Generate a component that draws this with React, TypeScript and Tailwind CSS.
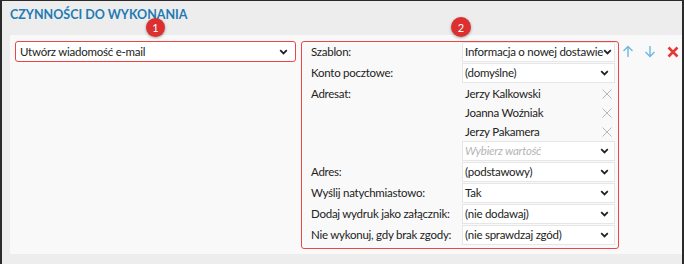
import React from "react";

const Chevron = () => (
  <svg width="9" height="6" viewBox="0 0 9 6" className="shrink-0">
    <path d="M1.2 1.2 L4.5 4.4 L7.8 1.2" fill="none" stroke="#222" strokeWidth="1.8" />
  </svg>
);

const Cross = () => (
  <svg width="10" height="10" viewBox="0 0 10 10" className="shrink-0">
    <path d="M0.5 0.5 L9.5 9.5 M9.5 0.5 L0.5 9.5" stroke="#b8b8b8" strokeWidth="1" />
  </svg>
);

function Select({ value, placeholder = false }: { value: string; placeholder?: boolean }) {
  return (
    <div className="h-[20px] w-[153px] bg-white border border-[#e6e6e6] flex items-center pl-[2px] pr-[5px] justify-between">
      <span className={placeholder ? "italic text-[#b5b5b5] whitespace-nowrap" : "text-[#222] whitespace-nowrap"}>{value}</span>
      <Chevron />
    </div>
  );
}

function Row({ label, value }: { label: string; value: string }) {
  return (
    <div className="flex items-center h-[20px]">
      <div className="w-[151px] text-[#222] whitespace-nowrap">{label}</div>
      <Select value={value} />
    </div>
  );
}

export default function App() {
  return (
    <div
      className="relative w-[684px] h-[264px] bg-[#ededed] border-t border-l-2 border-r-2 border-[#2a2a2a] text-[11.5px] tracking-[-0.25px] leading-none"
      style={{ fontFamily: 'Lato, "Noto Sans", sans-serif' }}
    >
      <div className="h-[34px] pl-[8px] pt-[8px]">
        <span className="text-[12.5px] font-bold text-[#1f7bb3] tracking-normal">CZYNNOŚCI DO WYKONANIA</span>
      </div>
      <div className="ml-[8px] mr-0 h-[219px] bg-[#f9f9f9] flex items-start pt-[6px] pl-[5px]">
        <div className="w-[281px] h-[21px] border border-[#ef4444] rounded-[3px] bg-white flex items-center justify-between pl-[4px] pr-[7px]">
          <span className="text-[#222]">Utwórz wiadomość e-mail</span>
          <Chevron />
        </div>
        <div className="ml-[5px] w-[318px] h-[208px] border border-[#ef4444] rounded-[3px] pl-[9px] pt-[0px] flex flex-col gap-[1px]">
          <Row label="Szablon:" value="Informacja o nowej dostawie" />
          <Row label="Konto pocztowe:" value="(domyślne)" />
          <div className="flex">
            <div className="w-[151px] h-[19px] flex items-center text-[#222]">Adresat:</div>
            <div className="flex flex-col">
              {["Jerzy Kalkowski", "Joanna Woźniak", "Jerzy Pakamera"].map((n) => (
                <div key={n} className="w-[153px] h-[19px] flex items-center justify-between pl-[3px] pr-[3px] text-[#222]">
                  <span>{n}</span>
                  <Cross />
                </div>
              ))}
              <Select value="Wybierz wartość" placeholder />
            </div>
          </div>
          <Row label="Adres:" value="(podstawowy)" />
          <Row label="Wyślij natychmiastowo:" value="Tak" />
          <Row label="Dodaj wydruk jako załącznik:" value="(nie dodawaj)" />
          <Row label="Nie wykonuj, gdy brak zgody:" value="(nie sprawdzaj zgód)" />
        </div>
        <div className="flex items-center gap-[10px] ml-[3px] mt-[4px]">
          <svg width="12" height="13" viewBox="0 0 12 13">
            <path d="M6 12 V1.5 M1.5 6 L6 1.5 L10.5 6" fill="none" stroke="#6cb8e2" strokeWidth="1.4" />
          </svg>
          <svg width="12" height="13" viewBox="0 0 12 13">
            <path d="M6 1 V11.5 M1.5 7 L6 11.5 L10.5 7" fill="none" stroke="#6cb8e2" strokeWidth="1.4" />
          </svg>
          <svg width="12" height="12" viewBox="0 0 12 12" className="ml-[1px]">
            <path d="M1.5 1.5 L10.5 10.5 M10.5 1.5 L1.5 10.5" fill="none" stroke="#e53935" strokeWidth="2.6" />
          </svg>
        </div>
      </div>
      <div className="absolute left-[144px] top-[17px] w-[19px] h-[19px] rounded-full bg-[#dc2f2f] shadow-[0_1px_3px_rgba(0,0,0,0.35)] flex items-center justify-center text-white text-[11px] tracking-normal">
        1
      </div>
      <div className="absolute left-[449px] top-[16px] w-[20px] h-[20px] rounded-full bg-[#dc2f2f] shadow-[0_1px_3px_rgba(0,0,0,0.35)] flex items-center justify-center text-white text-[11px] tracking-normal">
        2
      </div>
    </div>
  );
}
